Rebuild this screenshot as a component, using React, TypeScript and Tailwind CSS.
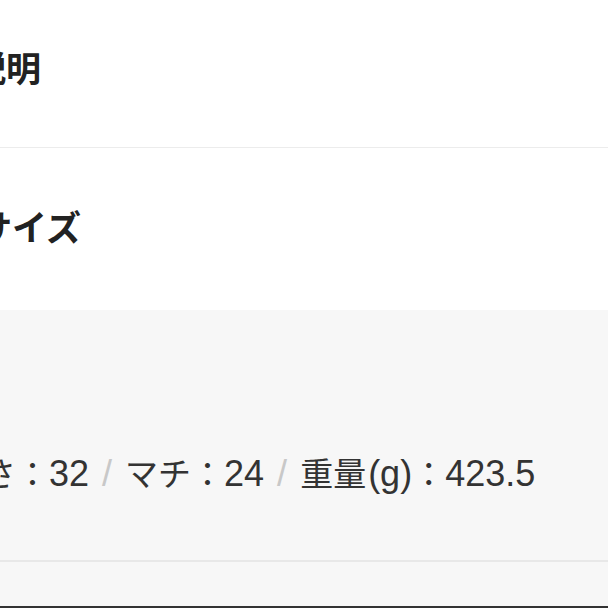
const sizes = [
  { label: "高さ", value: "32" },
  { label: "マチ", value: "24" },
  { label: "重量", unit: "(g)", value: "423.5" },
];

export default function App() {
  return (
    <div
      className="h-[608px] w-[608px] overflow-hidden bg-white text-[#222]"
      style={{ fontFamily: '"Liberation Sans", "Noto Sans CJK JP", sans-serif' }}
    >
      <section className="flex h-[148px] items-center border-b border-[#ececec] pb-[6px]">
        <h2 className="-ml-[134px] whitespace-nowrap text-[35px] font-bold">商品の説明</h2>
      </section>

      <section className="flex h-[162px] items-center">
        <h2 className="-ml-[128px] whitespace-nowrap text-[35px] font-bold">商品のサイズ</h2>
      </section>

      <section className="h-[252px] border-b-2 border-[#e8e8e8] bg-[#f7f7f7] pt-[140px]">
        <p className="-ml-[50px] whitespace-nowrap text-[33px] leading-[48px] text-[#333]">
          {sizes.map((s, i) => (
            <span key={s.label}>
              {i > 0 && <span className="px-[13px] text-[36px] text-[#c8c8c8]">/</span>}
              {s.label}
              {s.unit && <span className="ml-[2px] text-[36px]">{s.unit}</span>}：
              <span className="text-[36px]">{s.value}</span>
            </span>
          ))}
        </p>
      </section>

      <div className="h-[44px] bg-[#f7f7f7]" />
      <div className="h-[2px] bg-[#333]" />
    </div>
  );
}
